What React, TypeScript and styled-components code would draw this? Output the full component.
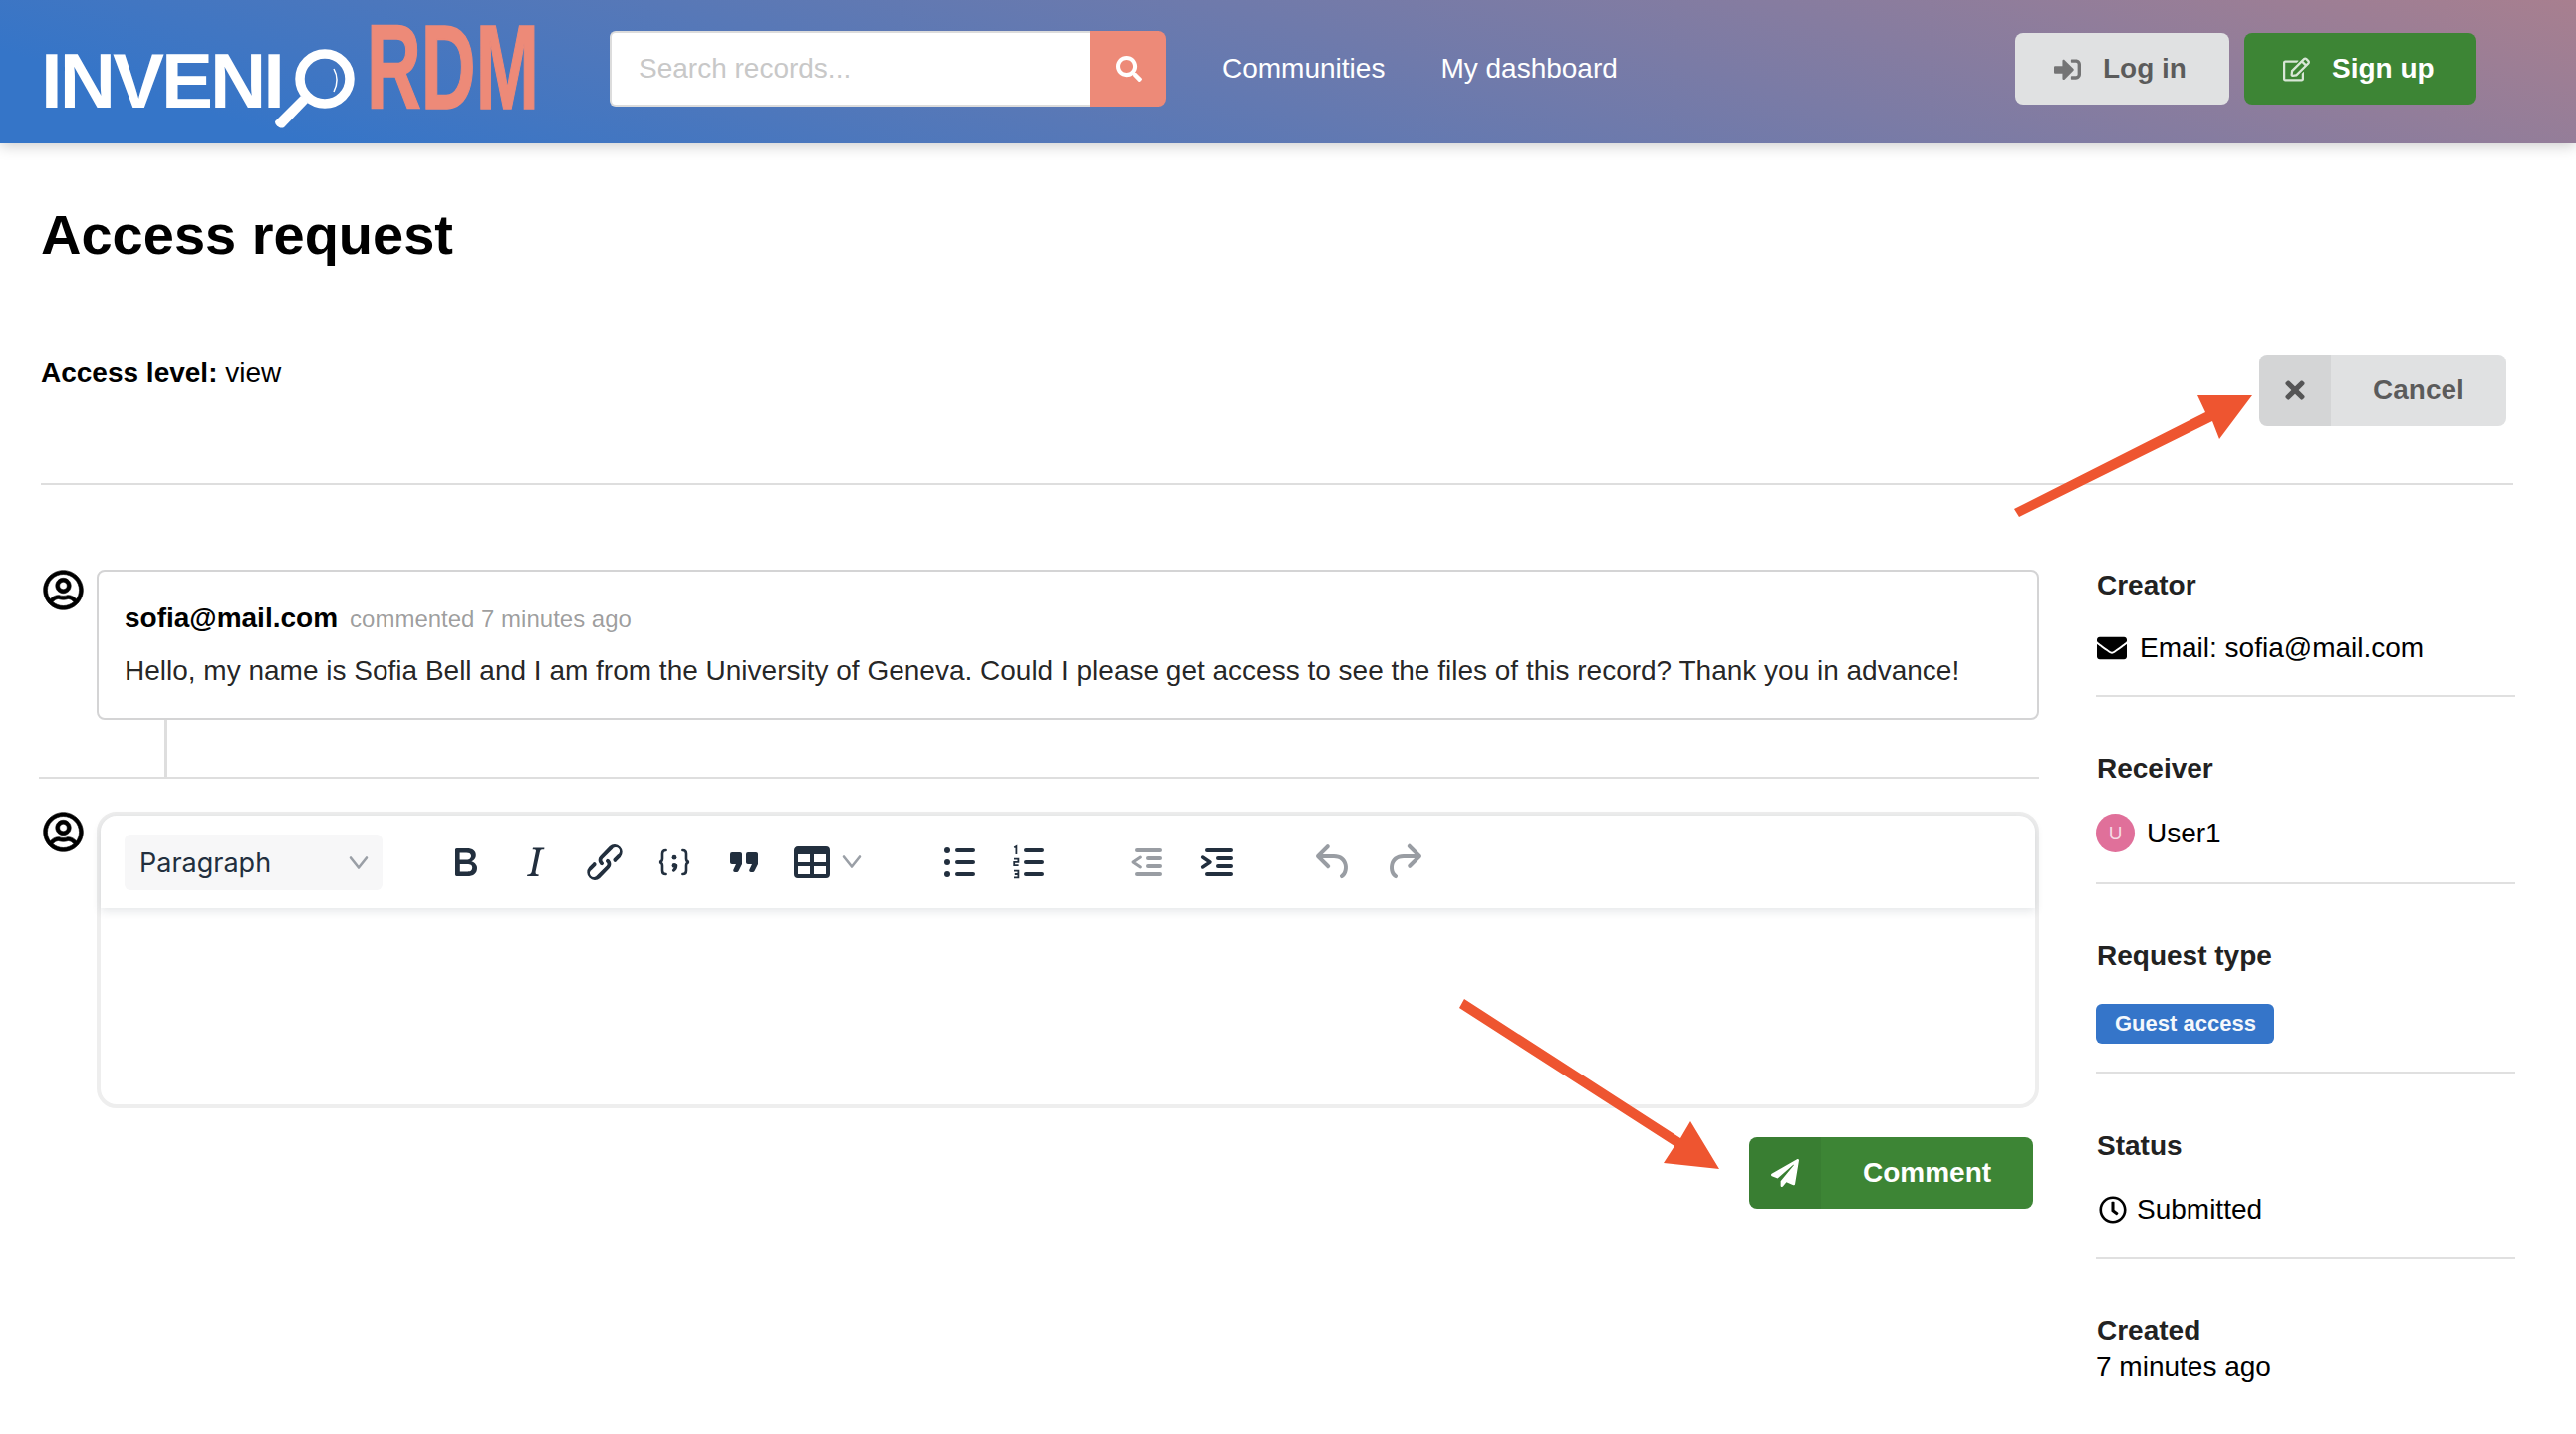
import React from 'react';
import styled, { createGlobalStyle } from 'styled-components';
import {
  FaEnvelope,
  FaPaperPlane,
  FaRegClock,
  FaRegEdit,
  FaRegUserCircle,
  FaSearch,
  FaSignInAlt,
  FaTimes,
} from 'react-icons/fa';

const GlobalStyle = createGlobalStyle`
  html, body {
    margin: 0;
    padding: 0;
    background: #fff;
    color: #000;
    font-family: "Liberation Sans", Arial, sans-serif;
    font-size: 28px;
  }
  * { box-sizing: border-box; }
`;

const Page = styled.div`
  position: relative;
  width: 2586px;
  min-height: 1440px;
  overflow: hidden;
`;

const Header = styled.header`
  position: relative;
  display: flex;
  align-items: center;
  height: 144px;
  padding: 0 100px 6px 0;
  background: linear-gradient(17deg, #3575c8 10%, #a87f8f 100%);
  box-shadow: 0 2px 14px rgba(0, 0, 0, 0.22);
`;

const LogoMark = styled.svg`
  display: block;
  flex: none;
  width: 580px;
  height: 144px;
  margin-top: 6px;
  overflow: visible;
`;

const Search = styled.div`
  display: flex;
  flex: none;
  width: 559px;
  height: 76px;
  margin-left: 32px;
`;

const SearchInput = styled.div`
  flex: 1;
  display: flex;
  align-items: center;
  padding-left: 27px;
  background: #fff;
  border: 2px solid #dcdcdc;
  border-right: none;
  border-radius: 6px 0 0 6px;
  color: #c8c8c8;
`;

const SearchButton = styled.div`
  flex: none;
  display: flex;
  align-items: center;
  justify-content: center;
  width: 77px;
  background: #ed8a78;
  border-radius: 0 8px 8px 0;
  color: #fff;
  font-size: 26px;
`;

const Nav = styled.nav`
  display: flex;
  gap: 56px;
  margin-left: 56px;
`;

const NavLink = styled.a`
  color: #fff;
`;

const Auth = styled.div`
  display: flex;
  gap: 15px;
  margin-left: auto;
`;

const AuthButton = styled.div<{ $primary?: boolean; $width: number }>`
  display: flex;
  align-items: center;
  gap: 22px;
  width: ${(p) => p.$width}px;
  height: 72px;
  padding-left: 39px;
  border-radius: 8px;
  font-weight: 700;
  background: ${(p) => (p.$primary ? '#3d8535' : '#e0e1e2')};
  color: ${(p) => (p.$primary ? '#fff' : 'rgba(0, 0, 0, 0.6)')};
  svg {
    font-size: 27px;
    opacity: 0.8;
  }
`;

const Main = styled.main`
  padding: 58px 61px 0 41px;
`;

const Title = styled.h1`
  margin: 0;
  font-size: 56px;
  line-height: 68px;
  font-weight: 700;
`;

const AccessRow = styled.div`
  display: flex;
  justify-content: space-between;
  align-items: flex-start;
  margin: 86px 2px 0 0;
  padding: 0 7px 57px 0;
  border-bottom: 2px solid #dedede;
`;

const AccessLevel = styled.div`
  margin-top: 1px;
  line-height: 36px;
`;

const LabeledButton = styled.div<{ $primary?: boolean }>`
  display: flex;
  align-items: stretch;
  height: 72px;
  border-radius: 8px;
  overflow: hidden;
  font-weight: 700;
  background: ${(p) => (p.$primary ? '#3d8535' : '#e0e1e2')};
  color: ${(p) => (p.$primary ? '#fff' : 'rgba(0, 0, 0, 0.6)')};
`;

const ButtonIcon = styled.span`
  display: flex;
  align-items: center;
  justify-content: center;
  width: 72px;
  background: rgba(0, 0, 0, 0.05);
`;

const ButtonText = styled.span<{ $width: number }>`
  display: flex;
  align-items: center;
  justify-content: center;
  width: ${(p) => p.$width}px;
`;

const Columns = styled.div`
  display: grid;
  grid-template-columns: 2008px 421px;
  gap: 57px;
  margin: 85px 0 0 -2px;
`;

const Timeline = styled.div`
  display: flex;
  flex-direction: column;
`;

const Row = styled.div`
  display: flex;
  gap: 13px;
  padding-left: 4px;
`;

const UserIcon = styled(FaRegUserCircle)`
  flex: none;
  width: 41px;
  height: 41px;
  stroke: currentColor;
  stroke-width: 8;
`;

const CommentBox = styled.div`
  flex: 1;
  height: 151px;
  padding: 29px 26px 0;
  border: 2px solid #d4d4d5;
  border-radius: 8px;
`;

const CommentHead = styled.div`
  display: flex;
  align-items: baseline;
  gap: 12px;
  line-height: 36px;
`;

const Author = styled.b`
  font-weight: 700;
`;

const Meta = styled.span`
  font-size: 24px;
  color: rgba(0, 0, 0, 0.4);
`;

const CommentBody = styled.p`
  margin: 16px 0 0;
  line-height: 36px;
  color: rgba(0, 0, 0, 0.87);
`;

const Connector = styled.div`
  width: 3px;
  height: 57px;
  margin-left: 126px;
  background: #dedede;
`;

const Separator = styled.div`
  height: 2px;
  margin-bottom: 33px;
  background: #dedede;
`;

const Editor = styled.div`
  flex: 1;
  height: 298px;
  border: 4px solid #eeeeee;
  border-radius: 20px;
`;

const Toolbar = styled.div`
  display: flex;
  align-items: center;
  height: 93px;
  padding-left: 24px;
  border-radius: 16px 16px 0 0;
  box-shadow: 0 3px 10px rgba(34, 47, 62, 0.12);
`;

const FormatSelect = styled.div`
  display: flex;
  align-items: center;
  justify-content: space-between;
  flex: none;
  width: 259px;
  height: 56px;
  padding: 2px 12px 0 15px;
  border-radius: 6px;
  background: #f7f7f8;
  color: #222f3e;
  font-family: Inter, "Liberation Sans", sans-serif;
  font-size: 27px;
`;

const ToolGroup = styled.div<{ $gap: number }>`
  display: flex;
  flex: none;
  margin-left: ${(p) => p.$gap}px;
`;

const ToolButton = styled.span<{ $muted?: boolean }>`
  display: flex;
  align-items: center;
  justify-content: center;
  width: 70px;
  height: 56px;
  color: ${(p) => (p.$muted ? '#999da3' : '#222f3e')};
  svg {
    display: block;
    flex: none;
  }
`;

const SplitButton = styled.span`
  display: flex;
  align-items: center;
  gap: 4px;
  width: 100px;
  height: 56px;
  padding-left: 9px;
  color: #222f3e;
  svg {
    display: block;
    flex: none;
  }
`;

const ChevronSmall = styled.svg`
  width: 24px;
  height: 16px;
  color: #9a9fa6;
`;

const FormActions = styled.div`
  display: flex;
  justify-content: flex-end;
  margin: 29px 6px 0 0;
`;

const Sidebar = styled.aside`
  display: flex;
  flex-direction: column;
`;

const Section = styled.section<{ $pad?: number; $space?: number; $last?: boolean }>`
  padding-bottom: ${(p) => (p.$last ? 0 : p.$pad ?? 31)}px;
  margin-bottom: ${(p) => (p.$last ? 0 : p.$space ?? 56)}px;
  border-bottom: ${(p) => (p.$last ? 'none' : '2px solid #e0e0e0')};
`;

const SectionTitle = styled.h3`
  margin: 0 0 0 1px;
  font-size: 28px;
  line-height: 32px;
  font-weight: 700;
  color: #222;
`;

const Value = styled.div<{ $gap?: number }>`
  display: flex;
  align-items: center;
  gap: 12px;
  min-height: 32px;
  margin-top: ${(p) => p.$gap ?? 31}px;
  line-height: 32px;
`;

const MailIcon = styled(FaEnvelope)`
  width: 30px;
  height: 30px;
  margin: 0 1px;
`;

const ClockIcon = styled(FaRegClock)`
  width: 28px;
  height: 28px;
  margin: 0 -2px 0 3px;
`;

const InitialAvatar = styled.span`
  display: flex;
  align-items: center;
  justify-content: center;
  width: 39px;
  height: 39px;
  border-radius: 50%;
  background: #e0709a;
  color: #f6dbe5;
  font-size: 19px;
`;

const TypeLabel = styled.span`
  display: block;
  width: 179px;
  height: 40px;
  margin-top: 32px;
  padding-left: 19px;
  border-radius: 6px;
  background: #3575c9;
  color: #f4f8fc;
  font-size: 22px;
  line-height: 40px;
  font-weight: 700;
`;

const Arrows = styled.svg`
  position: absolute;
  top: 0;
  left: 0;
  width: 2586px;
  height: 1440px;
  pointer-events: none;
`;

const Icon = ({ d }: { d: string }) => (
  <svg width="48" height="48" viewBox="0 0 24 24" fill="currentColor">
    <path d={d} />
  </svg>
);

const icons = {
  bold: 'M7.8 19c-.3 0-.5 0-.6-.2l-.2-.5V5.7c0-.2 0-.4.2-.5l.6-.2h5c1.5 0 2.7.3 3.5 1 .7.6 1.1 1.4 1.1 2.5a3 3 0 01-.6 1.9c-.4.6-1 1-1.6 1.2.4.1.9.3 1.3.6s.8.7 1 1.2c.4.4.5 1 .5 1.6 0 1.3-.4 2.3-1.3 3-.8.7-2.1 1-3.8 1H7.8zm5-8.3c.6 0 1.2-.1 1.6-.5.4-.3.6-.7.6-1.3 0-1.1-.8-1.7-2.4-1.7H9.3v3.5h3.4zm.5 6c.7 0 1.3-.1 1.7-.4.4-.4.6-.9.6-1.5s-.2-1-.7-1.4c-.4-.3-1-.4-2-.4H9.4v3.8h4z',
  italic: 'M16.7 4.7l-.1.9h-.3c-.6 0-1 0-1.4.3-.3.3-.4.6-.5 1.1l-2.1 9.8v.6c0 .5.4.8 1.4.8h.2l-.2.8H8l.2-.8h.2c1.1 0 1.8-.5 2-1.5l2-9.8.1-.5c0-.6-.4-.8-1.4-.8h-.3l.2-.9h5.8z',
  link: 'M6.2 12.3a1 1 0 011.4 1.4l-2 2a2 2 0 102.6 2.8l4.8-4.8a1 1 0 000-1.4 1 1 0 111.4-1.3 2.9 2.9 0 010 4L9.6 20a3.9 3.9 0 01-5.5-5.5l2-2zm11.6-.6a1 1 0 01-1.4-1.4l2-2a2 2 0 10-2.6-2.8L11 10.3a1 1 0 000 1.4A1 1 0 119.6 13a2.9 2.9 0 010-4L14.4 4a3.9 3.9 0 015.5 5.5l-2 2z',
  quote: 'M7.5 17h.9c.4 0 .7-.2.9-.6L11 13V8c0-.6-.4-1-1-1H6a1 1 0 00-1 1v4c0 .6.4 1 1 1h2l-1.3 2.7a1 1 0 00.8 1.3zm8 0h.9c.4 0 .7-.2.9-.6L19 13V8c0-.6-.4-1-1-1h-4a1 1 0 00-1 1v4c0 .6.4 1 1 1h2l-1.3 2.7a1 1 0 00.8 1.3z',
  table: 'M19 4a2 2 0 012 2v12a2 2 0 01-2 2H5a2 2 0 01-2-2V6c0-1.1.9-2 2-2h14zM5 14v4h6v-4H5zm14 0h-6v4h6v-4zm0-6h-6v4h6V8zM5 12h6V8H5v4z',
  undo: 'M6.4 8H12c3.7 0 6.2 2 6.8 5.1.6 2.7-.4 5.6-2.3 6.8a1 1 0 01-1-1.8c1.1-.6 1.8-2.7 1.4-4.6-.5-2.1-2.1-3.5-4.9-3.5H6.4l3.3 3.3a1 1 0 11-1.4 1.4l-5-5a1 1 0 010-1.4l5-5a1 1 0 011.4 1.4L6.4 8z',
  redo: 'M17.6 10H12c-2.8 0-4.4 1.4-4.9 3.5-.4 2 .3 4 1.4 4.6a1 1 0 11-1 1.8c-2-1.2-2.9-4.1-2.3-6.8.6-3 3-5.1 6.8-5.1h5.6l-3.3-3.3a1 1 0 111.4-1.4l5 5a1 1 0 010 1.4l-5 5a1 1 0 01-1.4-1.4l3.3-3.3z',
};

const CodeIcon = () => (
  <svg width="48" height="48" viewBox="0 0 24 24" fill="none" stroke="currentColor" strokeWidth="1.3" strokeLinecap="round">
    <path d="M7.8 6C6.4 6 6 6.6 6 7.8v2.4c0 1-.5 1.6-1.4 1.8.9.2 1.4.8 1.4 1.8v2.4c0 1.2.4 1.8 1.8 1.8" />
    <path d="M16.2 6c1.4 0 1.8.6 1.8 1.8v2.4c0 1 .5 1.6 1.4 1.8-.9.2-1.4.8-1.4 1.8v2.4c0 1.2-.4 1.8-1.8 1.8" />
    <circle cx="12" cy="9.6" r="1.2" fill="currentColor" stroke="none" />
    <path d="M12.9 13.6c0 1.2-.3 1.9-1.2 2.5" strokeWidth="1.5" />
    <circle cx="12" cy="13.7" r="1.2" fill="currentColor" stroke="none" />
  </svg>
);

const BulletIcon = () => (
  <svg width="48" height="48" viewBox="0 0 24 24" fill="currentColor">
    {[6, 12, 18].map((y) => (
      <g key={y}>
        <circle cx="6" cy={y} r="1.5" />
        <rect x="10" y={y - 1} width="10" height="2" rx="1" />
      </g>
    ))}
  </svg>
);

const NumberIcon = () => (
  <svg width="48" height="48" viewBox="0 0 24 24" fill="none" stroke="currentColor" strokeWidth="0.9">
    <path d="M4.6 4.6l1.1-.6v4" />
    <path d="M4.5 10.3h2.2v1.6H4.6v1.7h2.2" />
    <path d="M4.5 16.3h2.2v3.4H4.5M4.9 18h1.8" />
    {[6, 12, 18].map((y) => (
      <rect key={y} x="9.5" y={y - 1} width="10" height="2" rx="1" fill="currentColor" stroke="none" />
    ))}
  </svg>
);

const OutdentIcon = () => (
  <svg width="48" height="48" viewBox="0 0 24 24" fill="currentColor">
    <rect x="5" y="5" width="14" height="2" rx="1" />
    <rect x="10.5" y="9" width="8.5" height="2" rx="1" />
    <rect x="10.5" y="13" width="8.5" height="2" rx="1" />
    <rect x="5" y="17" width="14" height="2" rx="1" />
    <path d="M7.7 9.5L4 12l3.7 2.5" fill="none" stroke="currentColor" strokeWidth="1.5" strokeLinecap="round" strokeLinejoin="round" />
  </svg>
);

const IndentIcon = () => (
  <svg width="48" height="48" viewBox="0 0 24 24" fill="currentColor">
    <rect x="5.5" y="5" width="14" height="2" rx="1" />
    <rect x="11" y="9" width="8.5" height="2" rx="1" />
    <rect x="11" y="13" width="8.5" height="2" rx="1" />
    <rect x="5.5" y="17" width="14" height="2" rx="1" />
    <path d="M4.3 9.5L8 12l-3.7 2.5" fill="none" stroke="currentColor" strokeWidth="1.7" strokeLinecap="round" strokeLinejoin="round" />
  </svg>
);

const Chevron = () => (
  <ChevronSmall viewBox="0 0 24 16" fill="none" stroke="currentColor" strokeWidth="2.6" strokeLinecap="round" strokeLinejoin="round">
    <path d="M4 2.5l8 10 8-10" />
  </ChevronSmall>
);

const Logo = () => (
  <LogoMark viewBox="0 0 580 144">
    <text
      x="41"
      y="108"
      fill="#fff"
      fontFamily="'Liberation Sans', sans-serif"
      fontWeight="700"
      fontSize="78"
      textLength="245"
      lengthAdjust="spacing"
    >
      INVENI
    </text>
    <circle cx="326" cy="79" r="25" fill="none" stroke="#fff" strokeWidth="9.5" />
    <path d="M335 69c4 7 4 15 0 23" fill="none" stroke="#fff" strokeWidth="1.5" />
    <path d="M302 96l7 7-24 25c-4 2-9-2-9-6z" fill="#fff" />
    <text
      x="368"
      y="109"
      fill="#ed8a78"
      stroke="#ed8a78"
      strokeWidth="1.5"
      fontFamily="'Liberation Sans', sans-serif"
      fontWeight="700"
      fontSize="120"
      textLength="173"
      lengthAdjust="spacingAndGlyphs"
    >
      RDM
    </text>
  </LogoMark>
);

export default function App() {
  return (
    <Page>
      <GlobalStyle />
      <Header>
        <Logo />
        <Search>
          <SearchInput>Search records...</SearchInput>
          <SearchButton>
            <FaSearch />
          </SearchButton>
        </Search>
        <Nav>
          <NavLink>Communities</NavLink>
          <NavLink>My dashboard</NavLink>
        </Nav>
        <Auth>
          <AuthButton $width={215}>
            <FaSignInAlt />
            Log in
          </AuthButton>
          <AuthButton $primary $width={233}>
            <FaRegEdit />
            Sign up
          </AuthButton>
        </Auth>
      </Header>

      <Main>
        <Title>Access request</Title>
        <AccessRow>
          <AccessLevel>
            <b>Access level:</b> view
          </AccessLevel>
          <LabeledButton>
            <ButtonIcon>
              <FaTimes />
            </ButtonIcon>
            <ButtonText $width={176}>Cancel</ButtonText>
          </LabeledButton>
        </AccessRow>

        <Columns>
          <Timeline>
            <Row>
              <UserIcon />
              <CommentBox>
                <CommentHead>
                  <Author>sofia@mail.com</Author>
                  <Meta>commented 7 minutes ago</Meta>
                </CommentHead>
                <CommentBody>
                  Hello, my name is Sofia Bell and I am from the University of Geneva. Could I please get access to see the files of this record? Thank you in advance!
                </CommentBody>
              </CommentBox>
            </Row>
            <Connector />
            <Separator />
            <Row>
              <UserIcon />
              <Editor>
                <Toolbar>
                  <FormatSelect>
                    Paragraph
                    <Chevron />
                  </FormatSelect>
                  <ToolGroup $gap={48}>
                    <ToolButton><Icon d={icons.bold} /></ToolButton>
                    <ToolButton><Icon d={icons.italic} /></ToolButton>
                    <ToolButton><Icon d={icons.link} /></ToolButton>
                    <ToolButton><CodeIcon /></ToolButton>
                    <ToolButton><Icon d={icons.quote} /></ToolButton>
                    <SplitButton>
                      <Icon d={icons.table} />
                      <Chevron />
                    </SplitButton>
                  </ToolGroup>
                  <ToolGroup $gap={46}>
                    <ToolButton><BulletIcon /></ToolButton>
                    <ToolButton><NumberIcon /></ToolButton>
                  </ToolGroup>
                  <ToolGroup $gap={50}>
                    <ToolButton $muted><OutdentIcon /></ToolButton>
                    <ToolButton><IndentIcon /></ToolButton>
                  </ToolGroup>
                  <ToolGroup $gap={46}>
                    <ToolButton $muted><Icon d={icons.undo} /></ToolButton>
                    <ToolButton $muted><Icon d={icons.redo} /></ToolButton>
                  </ToolGroup>
                </Toolbar>
              </Editor>
            </Row>
            <FormActions>
              <LabeledButton $primary>
                <ButtonIcon>
                  <FaPaperPlane />
                </ButtonIcon>
                <ButtonText $width={213}>Comment</ButtonText>
              </LabeledButton>
            </FormActions>
          </Timeline>

          <Sidebar>
            <Section>
              <SectionTitle>Creator</SectionTitle>
              <Value>
                <MailIcon />
                Email: sofia@mail.com
              </Value>
            </Section>
            <Section $pad={30}>
              <SectionTitle>Receiver</SectionTitle>
              <Value $gap={29}>
                <InitialAvatar>U</InitialAvatar>
                User1
              </Value>
            </Section>
            <Section $pad={28} $space={57}>
              <SectionTitle>Request type</SectionTitle>
              <TypeLabel>Guest access</TypeLabel>
            </Section>
            <Section $space={57}>
              <SectionTitle>Status</SectionTitle>
              <Value $gap={32}>
                <ClockIcon />
                Submitted
              </Value>
            </Section>
            <Section $last>
              <SectionTitle>Created</SectionTitle>
              <Value $gap={4}>7 minutes ago</Value>
            </Section>
          </Sidebar>
        </Columns>
      </Main>

      <Arrows viewBox="0 0 2586 1440">
        <polygon fill="#ee5530" points="2261,397 2206,397 2214,414 2022,511 2027,519 2221,423 2228,441" />
        <polygon fill="#ee5530" points="1726,1174 1697,1126 1687,1143 1470,1003 1465,1012 1681,1151 1670,1168" />
      </Arrows>
    </Page>
  );
}
